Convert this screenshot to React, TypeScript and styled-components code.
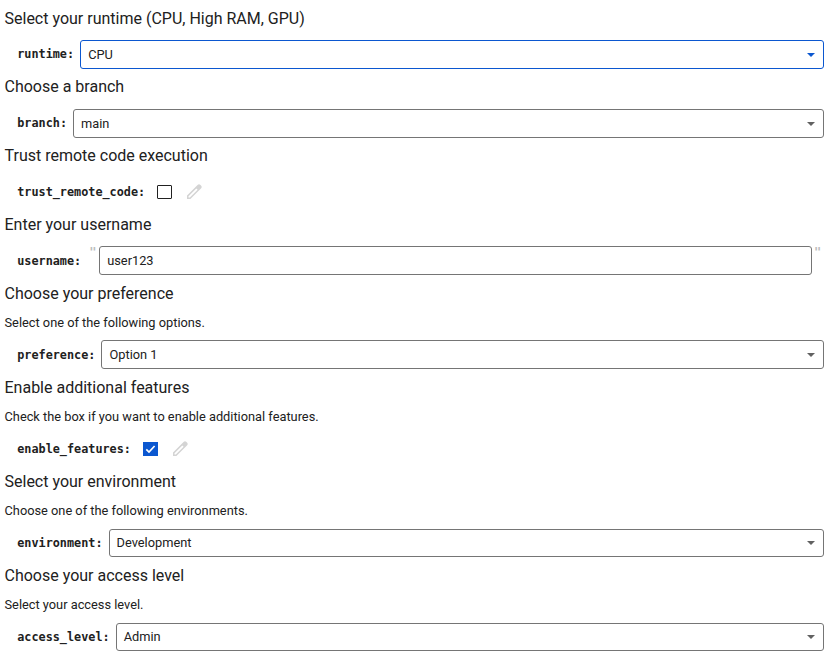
import React from 'react';
import styled, { createGlobalStyle } from 'styled-components';

const GlobalStyle = createGlobalStyle`
  * { box-sizing: border-box; }
  body { margin: 0; background: #fff; color: #212121; font-family: Roboto, sans-serif; }
`;

const Form = styled.main`
  display: flex;
  flex-direction: column;
  padding: 2px 7px 0 4.5px;
`;

const Section = styled.section<{ $tall?: boolean }>`
  display: flex;
  flex-direction: column;
  height: ${(p) => (p.$tall ? 94 : 69)}px;
`;

const Heading = styled.h2`
  margin: 0;
  height: 34px;
  font-size: 16px;
  line-height: 31px;
  font-weight: 400;

  ${Section}:first-of-type > & {
    line-height: 33px;
  }
`;

const Hint = styled.p`
  margin: 0;
  height: 25px;
  font-size: 12.8px;
  line-height: 21px;
`;

const Row = styled.div`
  display: flex;
  align-items: center;
  height: 35px;
  padding-left: 12.75px;
`;

const Label = styled.label`
  font: 700 11.8px/20px "DejaVu Sans Mono", monospace;
  white-space: pre;
`;

const Field = styled.div<{ $active?: boolean; $drop?: boolean; $compact?: boolean }>`
  display: flex;
  flex: 1;
  align-items: center;
  justify-content: space-between;
  height: ${(p) => (p.$compact ? 28 : 29)}px;
  margin-top: ${(p) => (p.$drop ? 2 : p.$compact ? 1 : 0)}px;
  margin-left: 6.1px;
  padding: 0 8px ${(p) => (p.$compact ? 1 : 0)}px 7px;
  border: 1px solid ${(p) => (p.$active ? '#0b57d0' : '#757575')};
  border-radius: 3px;
  color: ${(p) => (p.$active ? '#0b57d0' : '#616161')};
  font-size: 12.8px;
`;

const Value = styled.span`
  color: #212121;
`;

const Caret = styled.i`
  border: 4px solid transparent;
  border-top-color: currentColor;
  border-bottom: 0;
`;

const TextField = styled(Field)`
  margin-left: 3px;
`;

const Quote = styled.span<{ $closing?: boolean }>`
  align-self: flex-start;
  margin-left: ${(p) => (p.$closing ? 2 : 8)}px;
  width: ${(p) => (p.$closing ? 10 : 7)}px;
  color: #bdbdbd;
  font: 700 12px/18px "DejaVu Sans Mono", monospace;
  white-space: pre;
`;

const Box = styled.span<{ $checked?: boolean }>`
  display: flex;
  width: 15px;
  height: 14px;
  margin: 0 14px 0 12px;
  border: 1px solid ${(p) => (p.$checked ? '#0b57d0' : '#212121')};
  border-radius: ${(p) => (p.$checked ? 0 : 1)}px;
  background: ${(p) => (p.$checked ? '#0b57d0' : '#fff')};
`;

const CheckMark = styled.svg`
  width: 13px;
  height: 12px;
  fill: none;
  stroke: #fff;
  stroke-width: 1.7;
`;

const Pencil = styled.svg`
  width: 17px;
  height: 17px;
  margin-top: -1px;
  fill: #d4d4d4;
`;

interface FieldProps {
  name: string;
  value: string;
  active?: boolean;
  drop?: boolean;
  compact?: boolean;
}

function Select({ name, value, active, drop, compact }: FieldProps) {
  return (
    <Row>
      <Label>{name}:</Label>
      <Field $active={active} $drop={drop} $compact={compact}>
        <Value>{value}</Value>
        <Caret />
      </Field>
    </Row>
  );
}

function TextInput({ name, value }: FieldProps) {
  return (
    <Row>
      <Label>{name}:</Label>
      <Quote>"</Quote>
      <TextField><Value>{value}</Value></TextField>
      <Quote $closing>"</Quote>
    </Row>
  );
}

function Check({ name, checked }: { name: string; checked?: boolean }) {
  return (
    <Row>
      <Label>{name}:</Label>
      <Box $checked={checked}>
        {checked && <CheckMark viewBox="0 0 13 12"><path d="M2.3 6.3 5 9l5.6-6" /></CheckMark>}
      </Box>
      <Pencil viewBox="0 0 17 17">
        <path fillRule="evenodd" d="M1 12.6 11.8 1.8a1.7 1.7 0 0 1 2.4 0l1 1a1.7 1.7 0 0 1 0 2.4L4.4 16H1ZM2.5 14.5h1.3l7.8-7.8-1.3-1.3-7.8 7.8Z" />
      </Pencil>
    </Row>
  );
}

export default function App() {
  return (
    <Form>
      <GlobalStyle />
      <Section>
        <Heading>Select your runtime (CPU, High RAM, GPU)</Heading>
        <Select name="runtime" value="CPU" active drop />
      </Section>
      <Section>
        <Heading>Choose a branch</Heading>
        <Select name="branch" value="main" drop />
      </Section>
      <Section>
        <Heading>Trust remote code execution</Heading>
        <Check name="trust_remote_code" />
      </Section>
      <Section>
        <Heading>Enter your username</Heading>
        <TextInput name="username" value="user123" />
      </Section>
      <Section $tall>
        <Heading>Choose your preference</Heading>
        <Hint>Select one of the following options.</Hint>
        <Select name="preference" value="Option 1" />
      </Section>
      <Section $tall>
        <Heading>Enable additional features</Heading>
        <Hint>Check the box if you want to enable additional features.</Hint>
        <Check name="enable_features" checked />
      </Section>
      <Section $tall>
        <Heading>Select your environment</Heading>
        <Hint>Choose one of the following environments.</Hint>
        <Select name="environment" value="Development" compact />
      </Section>
      <Section $tall>
        <Heading>Choose your access level</Heading>
        <Hint>Select your access level.</Hint>
        <Select name="access_level" value="Admin" compact />
      </Section>
    </Form>
  );
}
